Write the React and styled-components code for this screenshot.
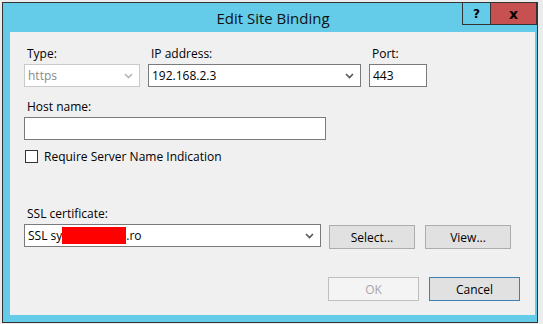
import React from "react";
import styled, { createGlobalStyle } from "styled-components";

const GlobalStyle = createGlobalStyle`
  html, body {
    margin: 0;
    padding: 0;
    background: #ececec;
    font-family: "Open Sans", "Noto Sans", sans-serif;
  }
`;

const Window = styled.div`
  margin: 2px 0 0 2px;
  width: 534px;
  height: 319px;
  border: 1px solid #333;
  background: #64cbe9;
  display: flex;
  flex-direction: column;
`;

const TitleBar = styled.div`
  position: relative;
  height: 29px;
  display: flex;
  align-items: center;
  justify-content: center;
`;

const Title = styled.div`
  font-size: 15px;
  color: #111;
  padding-left: 6px;
  padding-top: 1px;
`;

const CaptionButtons = styled.div`
  position: absolute;
  top: -1px;
  right: 0;
  display: flex;
  border: 1px solid #333;
`;

const CaptionButton = styled.div`
  width: ${(p) => (p.$close ? "45px" : "27px")};
  height: 21px;
  background: ${(p) => (p.$close ? "#c75050" : "#64cbe9")};
  border-left: ${(p) => (p.$close ? "1px solid #333" : "none")};
  display: flex;
  align-items: center;
  justify-content: center;
  font-family: "DejaVu Sans", sans-serif;
  font-weight: bold;
  font-size: ${(p) => (p.$close ? "14px" : "12px")};
  color: #000;
`;

const Content = styled.div`
  flex: 1;
  margin: 0 2px 7px 7px;
  background: #f0f0f0;
  padding: 15px 0 0 14px;
  display: flex;
  flex-direction: column;
  font-size: 12px;
  color: #000;
`;

const Row = styled.div`
  display: flex;
  align-items: flex-start;
  gap: ${(p) => p.$gap || 8}px;
  margin-top: ${(p) => p.$top || 0}px;
`;

const Field = styled.div`
  display: flex;
  flex-direction: column;
  width: ${(p) => p.$w}px;
`;

const Label = styled.div`
  height: 14px;
  line-height: 14px;
  margin: 0 0 3px 3px;
  white-space: nowrap;
`;

const Box = styled.div`
  box-sizing: border-box;
  height: 23px;
  width: 100%;
  background: #fff;
  border: 1px solid ${(p) => (p.$disabled ? "#c9c9c9" : "#7a7a7a")};
  color: ${(p) => (p.$disabled ? "#8a8a8a" : "#000")};
  display: flex;
  align-items: center;
  padding: 0 6px 0 3px;
  white-space: nowrap;
`;

const BoxText = styled.span`
  flex: 1;
  display: flex;
  align-items: center;
`;

const Redacted = styled.span`
  display: inline-block;
  width: 64px;
  height: 17px;
  background: #ff0000;
`;

const Chevron = ({ color }) => (
  <svg width="9" height="6" viewBox="0 0 9 6">
    <polyline points="1,1 4.5,4.5 8,1" fill="none" stroke={color} strokeWidth="1.6" />
  </svg>
);

const CheckRow = styled.label`
  display: flex;
  align-items: center;
  gap: 6px;
  height: 13px;
  line-height: 13px;
  margin-top: 10px;
  margin-left: 1px;
`;

const CheckBox = styled.span`
  box-sizing: border-box;
  width: 13px;
  height: 13px;
  border: 1px solid #333;
  background: #fff;
`;

const Button = styled.div`
  box-sizing: border-box;
  width: ${(p) => p.$w || 86}px;
  height: 24px;
  margin-top: ${(p) => p.$offset || 0}px;
  margin-left: ${(p) => p.$left || 0}px;
  display: flex;
  align-items: center;
  justify-content: center;
  background: ${(p) => (p.$disabled ? "#f4f4f4" : "#e1e1e1")};
  border: 1px solid
    ${(p) => (p.$disabled ? "#bfbfbf" : p.$focused ? "#3c7fb1" : "#adadad")};
  color: ${(p) => (p.$disabled ? "#a8a8a8" : "#000")};
`;

const Footer = styled.div`
  display: flex;
  justify-content: flex-end;
  gap: 10px;
  margin-top: 28px;
  padding-right: 15px;
`;

export default function App() {
  return (
    <>
      <GlobalStyle />
      <Window>
        <TitleBar>
          <Title>Edit Site Binding</Title>
          <CaptionButtons>
            <CaptionButton>?</CaptionButton>
            <CaptionButton $close>x</CaptionButton>
          </CaptionButtons>
        </TitleBar>
        <Content>
          <Row $gap={8}>
            <Field $w={116}>
              <Label>Type:</Label>
              <Box $disabled>
                <BoxText>https</BoxText>
                <Chevron color="#b5b5b5" />
              </Box>
            </Field>
            <Field $w={213}>
              <Label>IP address:</Label>
              <Box>
                <BoxText>192.168.2.3</BoxText>
                <Chevron color="#555" />
              </Box>
            </Field>
            <Field $w={58}>
              <Label>Port:</Label>
              <Box>
                <BoxText>443</BoxText>
              </Box>
            </Field>
          </Row>
          <Row $top={13}>
            <Field $w={302}>
              <Label>Host name:</Label>
              <Box />
            </Field>
          </Row>
          <CheckRow>
            <CheckBox />
            Require Server Name Indication
          </CheckRow>
          <Row $top={44} $gap={8}>
            <Field $w={297}>
              <Label>SSL certificate:</Label>
              <Box>
                <BoxText>
                  SSL sy<Redacted />.ro
                </BoxText>
                <Chevron color="#555" />
              </Box>
            </Field>
            <Button $offset={18}>Select...</Button>
            <Button $offset={18} $left={2}>View...</Button>
          </Row>
          <Footer>
            <Button $w={91} $disabled>OK</Button>
            <Button $w={91} $focused>Cancel</Button>
          </Footer>
        </Content>
      </Window>
    </>
  );
}
